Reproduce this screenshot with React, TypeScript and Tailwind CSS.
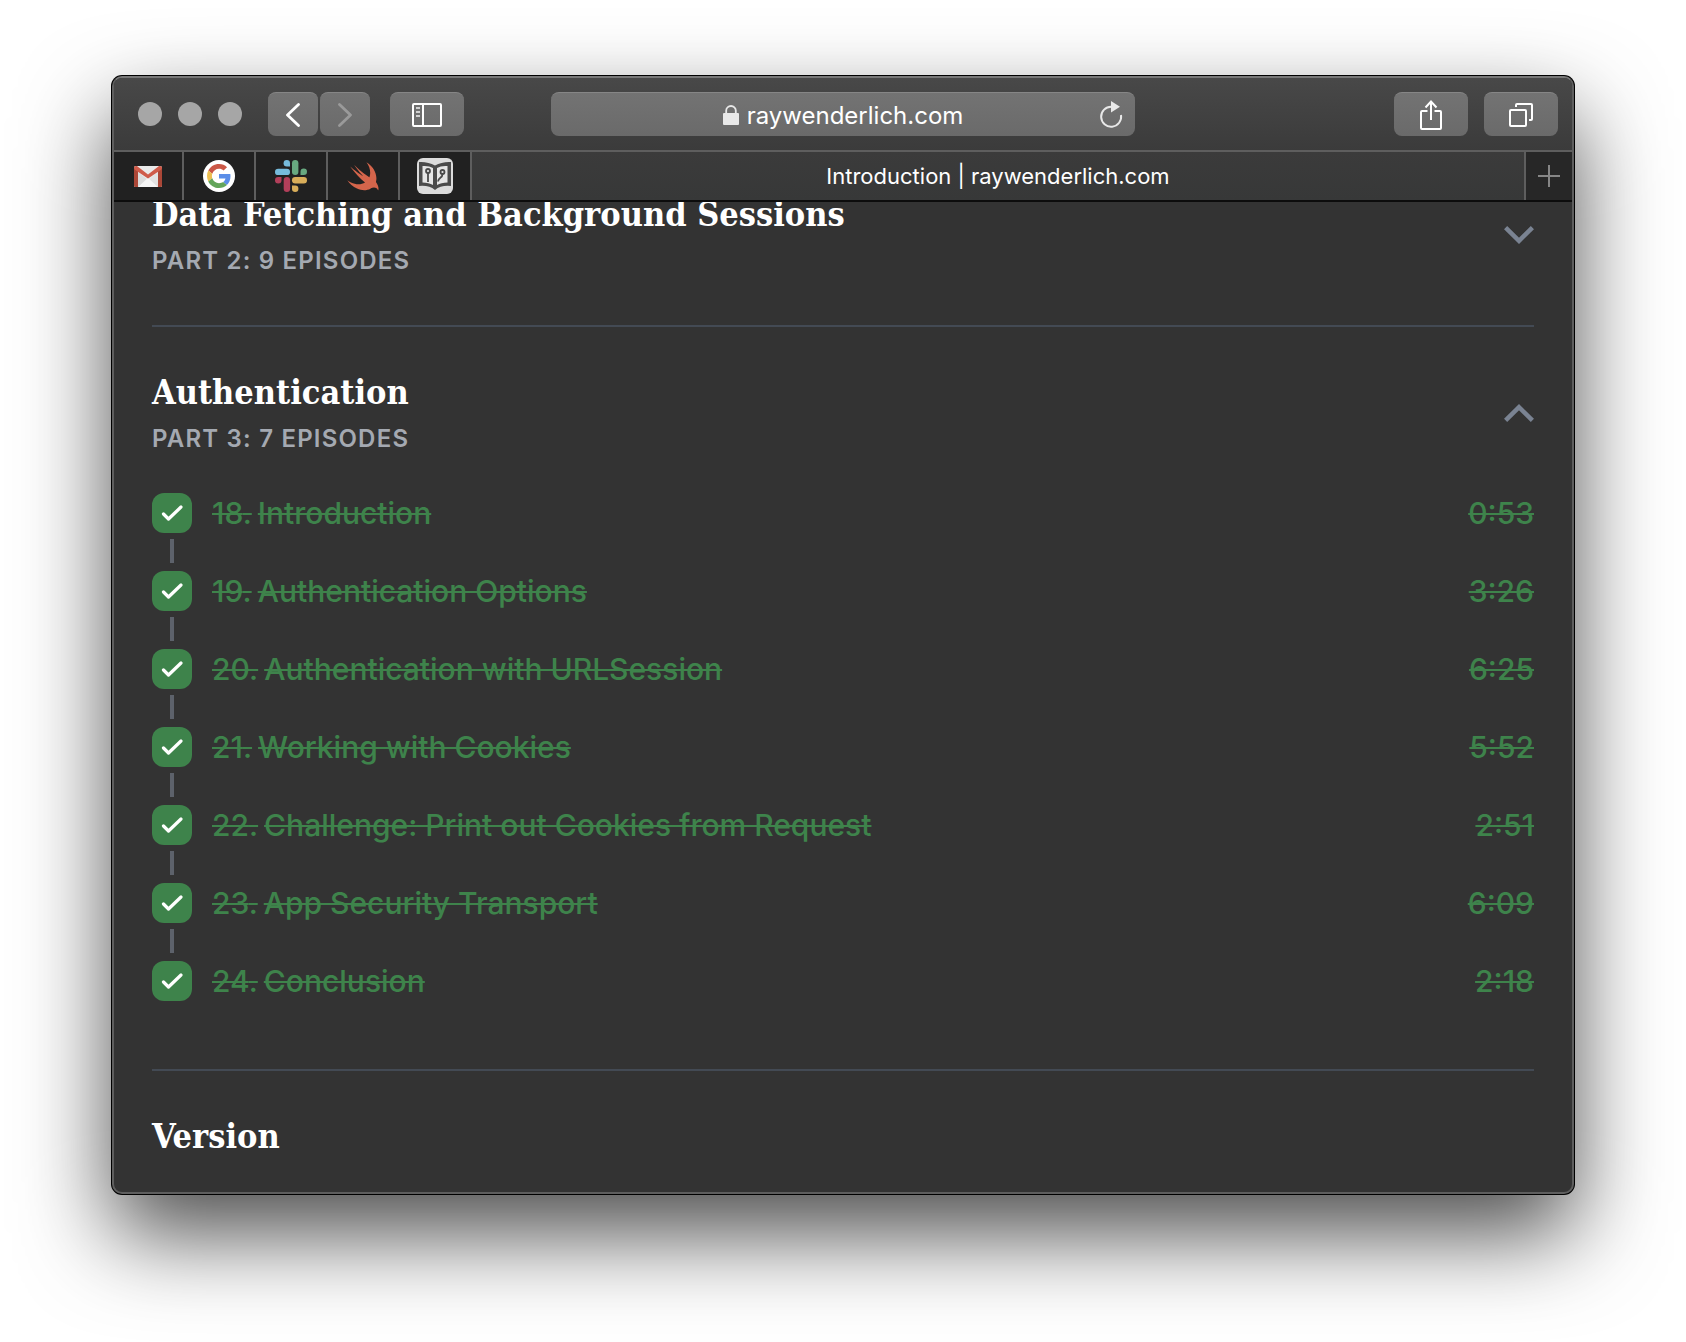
import React from 'react';

const episodes = [
  { number: 18, title: 'Introduction', length: '0:53' },
  { number: 19, title: 'Authentication Options', length: '3:26' },
  { number: 20, title: 'Authentication with URLSession', length: '6:25' },
  { number: 21, title: 'Working with Cookies', length: '5:52' },
  { number: 22, title: 'Challenge: Print out Cookies from Request', length: '2:51' },
  { number: 23, title: 'App Security Transport', length: '6:09' },
  { number: 24, title: 'Conclusion', length: '2:18' },
];

function BackIcon({ className = '' }: { className?: string }) {
  return (
    <svg width="14" height="24" viewBox="0 0 14 24" fill="none" stroke="currentColor" strokeWidth="2.8" strokeLinecap="round" strokeLinejoin="round" className={className} aria-hidden="true">
      <path d="M12.5 1.5 1.5 12l11 10.500" />
    </svg>
  );
}

function SidebarIcon() {
  return (
    <svg width="30" height="24" viewBox="0 0 30 24" fill="none" stroke="#fff" strokeWidth="2" aria-hidden="true">
      <rect x="1" y="1" width="28" height="22" rx="1" />
      <path d="M11 1v22" />
      <path d="M4 5h4M4 9h4M4 13h4" stroke="#d0d0d0" />
    </svg>
  );
}

function ShareIcon() {
  return (
    <svg width="22" height="30" viewBox="0 0 22 30" fill="none" stroke="#fff" strokeWidth="2" aria-hidden="true">
      <path d="M7.500 11H2a1 1 0 0 0-1 1V28a1 1 0 0 0 1 1h18a1 1 0 0 0 1-1V12a1 1 0 0 0-1-1h-5.500" />
      <path d="M11 20V2M5.500 7.500 11 1.500l5.500 6" />
    </svg>
  );
}

function TabsIcon() {
  return (
    <svg width="24" height="24" viewBox="0 0 24 24" fill="none" stroke="#fff" strokeWidth="2" aria-hidden="true">
      <rect x="1" y="7" width="16" height="16" rx="1" />
      <path d="M7 4V2a1 1 0 0 1 1-1h14a1 1 0 0 1 1 1v14a1 1 0 0 1-1 1h-2" />
    </svg>
  );
}

function LockIcon() {
  return (
    <svg width="16" height="20" viewBox="0 0 16 20" aria-hidden="true">
      <path d="M3.200 9V5.500a4.800 4.500 0 0 1 9.600 0V9" fill="none" stroke="#e8e8e8" strokeWidth="1.800" />
      <rect y="8" width="16" height="12" rx="1" fill="#e8e8e8" />
    </svg>
  );
}

function ReloadIcon() {
  return (
    <svg width="24" height="28" viewBox="0 0 24 28" aria-hidden="true">
      <path d="M12.500 5.700A10 10 0 1 0 22 14" fill="none" stroke="#e8e8e8" strokeWidth="2" />
      <path d="M12 0l9 5.700-9 5.800z" fill="#e8e8e8" />
    </svg>
  );
}

function GmailIcon() {
  return (
    <svg width="28" height="21" viewBox="0 0 28 21" aria-hidden="true">
      <rect width="28" height="21" rx="1.500" fill="#e9e9e9" />
      <path d="M4 21 14 12l10 9z" fill="#f6f6f6" />
      <path d="M4 6v15l8.500-8z" fill="#dcdcdc" />
      <path d="M24 6v15l-8.500-8z" fill="#e2e2e2" />
      <path d="M0 1.500V19.500A1.500 1.500 0 0 0 1.500 21H4V3zM28 1.500V19.500A1.500 1.500 0 0 1 26.500 21H24V3z" fill="#ab4737" />
      <path d="M0 2C0 .8.800 0 2 0h1l11 8.500L25 0h1c1.200 0 2 .8 2 2 0 .7-.3 1.300-.9 1.700L14 12.500 .9 3.700C.3 3.300 0 2.700 0 2z" fill="#cf5b4a" />
    </svg>
  );
}

function GoogleIcon() {
  return (
    <span className="flex size-8 items-center justify-center rounded-full bg-white">
      <svg width="24" height="24" viewBox="0 0 48 48" aria-hidden="true">
        <path fill="#cb5746" d="M24 9.500c3.540 0 6.710 1.220 9.210 3.600l6.850-6.850C35.900 2.380 30.470 0 24 0 14.620 0 6.510 5.380 2.560 13.220l7.980 6.190C12.430 13.720 17.740 9.500 24 9.500z" />
        <path fill="#5a8de8" d="M46.980 24.550c0-1.570-.15-3.090-.38-4.550H24v9.020h12.940c-.58 2.960-2.260 5.480-4.780 7.180l7.730 6c4.510-4.180 7.090-10.360 7.090-17.650z" />
        <path fill="#ecbe50" d="M10.530 28.590c-.48-1.450-.76-2.990-.76-4.590s.27-3.140.76-4.590l-7.980-6.190C.92 16.460 0 20.120 0 24c0 3.880.92 7.540 2.560 10.780l7.970-6.190z" />
        <path fill="#63a55b" d="M24 48c6.480 0 11.930-2.130 15.890-5.810l-7.730-6c-2.150 1.450-4.920 2.300-8.160 2.300-6.260 0-11.570-4.220-13.470-9.910l-7.980 6.190C6.510 42.620 14.620 48 24 48z" />
      </svg>
    </span>
  );
}

function SlackIcon() {
  return (
    <svg width="32" height="32" viewBox="0 0 32 32" aria-hidden="true">
      <g fill="#76bbdc">
        <rect y="8.700" width="15" height="6.400" rx="3.200" />
        <path d="M15 6.500h-3.200A3.200 3.250 0 1 1 15 3.250z" />
      </g>
      <g fill="#68a980">
        <rect x="17" width="6.400" height="15" rx="3.200" />
        <path d="M25.500 15v-3.200A3.250 3.200 0 1 1 28.750 15z" />
      </g>
      <g fill="#d9ae5a">
        <rect x="17" y="17" width="15" height="6.400" rx="3.200" />
        <path d="M17 25.500h3.200A3.200 3.250 0 1 1 17 28.750z" />
      </g>
      <g fill="#b23f5a">
        <rect x="8.700" y="17" width="6.400" height="15" rx="3.200" />
        <path d="M6.500 17v3.200A3.250 3.200 0 1 1 3.250 17z" />
      </g>
    </svg>
  );
}

function SwiftIcon() {
  return (
    <svg width="32" height="29" viewBox="5.500 8 46 41.500" fill="#d5654b" aria-hidden="true">
      <path d="M47.061 36.661c-.001-.001-.002-.003-.004-.004.066-.224.134-.446.191-.675 2.465-9.821-3.550-21.432-13.731-27.546 4.461 6.048 6.434 13.374 4.681 19.780-.156.571-.344 1.120-.552 1.653-.225-.148-.510-.316-.890-.527 0 0-10.127-6.252-21.103-17.312-.288-.290 5.852 8.777 12.822 16.140-3.284-1.843-12.434-8.500-18.227-13.802.712 1.187 1.558 2.330 2.489 3.430C17.573 23.932 23.882 31.500 31.440 37.314c-5.310 3.250-12.814 3.502-20.285.003-1.848-.866-3.593-1.917-5.188-3.108 3.150 5.042 8.012 9.407 13.918 11.947 7.072 3.039 14.098 2.831 19.337.048l-.004.007c.024-.015.055-.032.080-.047.214-.116.428-.234.636-.358 2.516-1.306 7.485-2.630 10.152 2.559.653 1.271 2.039-5.462-3.025-11.704z" />
    </svg>
  );
}

function BookIcon() {
  return (
    <svg width="36" height="36" viewBox="0 0 36 36" aria-hidden="true">
      <rect width="36" height="36" rx="6" fill="#dcdcdc" />
      <path d="M2 4Q11 3.500 18 7.500 25 3.500 34 4V28Q24 27 18 32 12 27 2 28z" fill="#4b4b4b" />
      <path d="M5.500 8Q12 7.500 16 10V27Q12 24.500 5.500 24.500zM30.500 8Q24 7.500 20 10V27Q24 24.500 30.500 24.500z" fill="#e6e6e6" />
      <g fill="none" stroke="#4b4b4b" strokeWidth="1.800">
        <circle cx="11" cy="13" r="2" />
        <path d="M11 15V24" />
        <circle cx="25.500" cy="14" r="2" />
        <path d="M25.500 16c0 4.500-4 3-4.500 7.500" />
      </g>
    </svg>
  );
}

function Chevron({ up = false }: { up?: boolean }) {
  return (
    <svg width="30" height="18" viewBox="0 0 30 18" fill="none" stroke="#7a8392" strokeWidth="4.500" className={up ? 'rotate-180' : ''} aria-hidden="true">
      <path d="M1.600 1.600 15 14.800 28.400 1.600" />
    </svg>
  );
}

const button =
  'flex h-11 items-center justify-center rounded-lg border-t border-[#868686] bg-linear-to-b from-[#737373] to-[#6a6a6a]';

function Toolbar() {
  return (
    <header className="grid h-[74px] grid-cols-[1fr_minmax(0,584px)_1fr] items-center border-b-2 border-[#5e5e5e] bg-linear-to-b from-[#484848] to-[#3b3b3b] px-3.5">
      <div className="flex items-center pl-2.5">
        <div className="flex gap-4">
          <button aria-label="Close" className="size-6 rounded-full bg-[#a6a6a6]" />
          <button aria-label="Minimize" className="size-6 rounded-full bg-[#a6a6a6]" />
          <button aria-label="Zoom" className="size-6 rounded-full bg-[#a6a6a6]" />
        </div>
        <div className="ml-6.5 flex gap-0.5">
          <button aria-label="Back" className={`${button} w-12.5 text-white`}>
            <BackIcon />
          </button>
          <button aria-label="Forward" className={`${button} w-12.5 text-[#9a9a9a]`}>
            <BackIcon className="rotate-180" />
          </button>
        </div>
        <button aria-label="Sidebar" className={`${button} ml-5 w-18.5`}>
          <SidebarIcon />
        </button>
      </div>

      <div className={`${button} relative gap-2`}>
        <LockIcon />
        <input
          aria-label="Address"
          defaultValue="raywenderlich.com"
          className="bg-transparent pt-0.5 text-2xl text-white outline-none [field-sizing:content]"
        />
        <button aria-label="Reload" className="absolute right-3">
          <ReloadIcon />
        </button>
      </div>

      <div className="flex justify-end gap-4">
        <button aria-label="Share" className={`${button} w-18.5`}>
          <ShareIcon />
        </button>
        <button aria-label="Show tabs" className={`${button} w-18.5`}>
          <TabsIcon />
        </button>
      </div>
    </header>
  );
}

const pinned = [
  { name: 'Gmail', icon: <GmailIcon /> },
  { name: 'Google', icon: <GoogleIcon /> },
  { name: 'Slack', icon: <SlackIcon /> },
  { name: 'Swift', icon: <SwiftIcon /> },
  { name: 'raywenderlich.com', icon: <BookIcon /> },
];

function TabBar() {
  return (
    <nav className="flex h-[50px] border-b-2 border-[#0c0c0c] bg-[#212121]">
      {pinned.map((tab) => (
        <button
          key={tab.name}
          aria-label={tab.name}
          className="flex w-18 items-center justify-center border-r-2 border-[#5e5e5e] first:w-17.5"
        >
          {tab.icon}
        </button>
      ))}
      <button className="flex-1 truncate bg-linear-to-b from-[#3b3b3b] to-[#373838] text-[22px] text-white">
        Introduction | raywenderlich.com
      </button>
      <button aria-label="New tab" className="flex w-12 items-center justify-center border-l-2 border-[#5e5e5e] bg-[#272727]">
        <svg width="22" height="22" viewBox="0 0 22 22" stroke="#868686" strokeWidth="2" aria-hidden="true">
          <path d="M0 11h22M11 0v22" />
        </svg>
      </button>
    </nav>
  );
}

const headingFont = "font-['DejaVu_Serif_Condensed','DejaVu_Serif',serif]";

function SectionHeader({ title, part, open = false }: { title: string; part: string; open?: boolean }) {
  return (
    <button className="flex w-full items-center justify-between text-left" aria-expanded={open}>
      <span className="flex flex-col gap-2.5">
        <span className={`${headingFont} text-[34px] leading-[42px] font-bold text-white`}>{title}</span>
        <span className="text-2xl leading-8 font-semibold tracking-wider text-[#a4a9b1] uppercase">{part}</span>
      </span>
      <Chevron up={open} />
    </button>
  );
}

function EpisodeList() {
  return (
    <ol className="mt-[38px] flex flex-col">
      {episodes.map((episode, index) => (
        <li key={episode.number}>
          <div className="flex h-10 items-center gap-5 text-[30px] font-medium text-[#3e834b]">
            <span className="grid size-10 place-items-center">
              <input
                type="checkbox"
                defaultChecked
                aria-label={`${episode.title} completed`}
                className="col-start-1 row-start-1 size-10 appearance-none rounded-xl bg-[#3e834b]"
              />
              <svg width="22" height="18" viewBox="0 0 22 18" fill="none" stroke="#fff" strokeWidth="3.200" strokeLinecap="round" strokeLinejoin="round" className="pointer-events-none col-start-1 row-start-1" aria-hidden="true">
                <path d="M2.500 10l5 5L20 3" />
              </svg>
            </span>
            <a href="#episode" className="flex flex-1 items-center gap-1.5 line-through decoration-2">
              <span>{episode.number}.</span>
              <span className="flex-1">{episode.title}</span>
              <span>{episode.length}</span>
            </a>
          </div>
          {index < episodes.length - 1 && <div className="mt-1.5 mb-2 ml-[18px] h-6 w-1 bg-[#5d626b]" />}
        </li>
      ))}
    </ol>
  );
}

export default function App() {
  return (
    <div className="min-h-screen bg-white px-28 pt-19 font-[Inter,sans-serif]">
      <div className="overflow-hidden rounded-[10px] border-2 border-[#5e5e5e] border-t-[#787878] bg-[#333333] shadow-[0_0_0_1px_#000,0_40px_90px_rgba(0,0,0,0.7)]">
        <Toolbar />
        <TabBar />
        <main className="overflow-hidden px-[38px]">
          <section className="-mt-[9px] pb-12">
            <SectionHeader title="Data Fetching and Background Sessions" part="Part 2: 9 Episodes" />
          </section>
          <section className="border-t-2 border-[#434a54] pt-11 pb-[68px]">
            <SectionHeader title="Authentication" part="Part 3: 7 Episodes" open />
            <EpisodeList />
          </section>
          <section className="border-t-2 border-[#434a54] pt-11 pb-[35px]">
            <h2 className={`${headingFont} text-[34px] leading-[42px] font-bold text-white`}>Version</h2>
          </section>
        </main>
      </div>
    </div>
  );
}
